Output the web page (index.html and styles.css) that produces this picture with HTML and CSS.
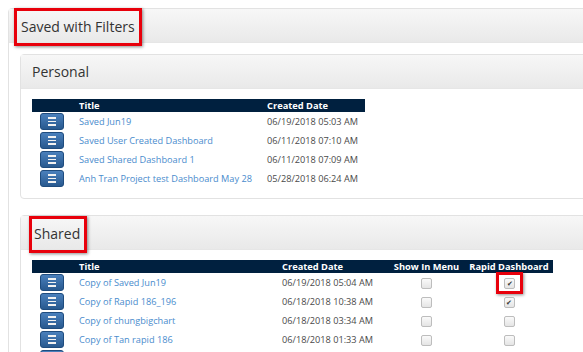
FILE: index.html
```html
<!DOCTYPE html>
<html lang="en">
<head>
    <meta charset="UTF-8">
    <title>Saved with Filters</title>
    <link rel="stylesheet" href="styles.css">
</head>
<body>
    <div class="panel outer">
        <div class="panel-heading">
            <span class="mark title-mark">Saved with Filters</span>
        </div>
        <div class="panel-body">

            <div class="panel inner">
                <div class="panel-heading">
                    <span class="sub-title">Personal</span>
                </div>
                <div class="panel-body">
                    <table class="grid personal">
                        <thead>
                            <tr>
                                <th class="col-btn"></th>
                                <th class="col-title">Title</th>
                                <th class="col-date">Created Date</th>
                            </tr>
                        </thead>
                        <tbody>
                            <tr>
                                <td><span class="menu-btn"><i></i><i></i><i></i></span></td>
                                <td><a href="#">Saved Jun19</a></td>
                                <td>06/19/2018 05:03 AM</td>
                            </tr>
                            <tr>
                                <td><span class="menu-btn"><i></i><i></i><i></i></span></td>
                                <td><a href="#">Saved User Created Dashboard</a></td>
                                <td>06/11/2018 07:10 AM</td>
                            </tr>
                            <tr>
                                <td><span class="menu-btn"><i></i><i></i><i></i></span></td>
                                <td><a href="#">Saved Shared Dashboard 1</a></td>
                                <td>06/11/2018 07:09 AM</td>
                            </tr>
                            <tr>
                                <td><span class="menu-btn"><i></i><i></i><i></i></span></td>
                                <td><a href="#">Anh Tran Project test Dashboard May 28</a></td>
                                <td>05/28/2018 06:24 AM</td>
                            </tr>
                        </tbody>
                    </table>
                </div>
            </div>

            <div class="panel inner">
                <div class="panel-heading">
                    <span class="mark sub-title shared-mark">Shared</span>
                </div>
                <div class="panel-body">
                    <table class="grid shared">
                        <thead>
                            <tr>
                                <th class="col-btn"></th>
                                <th class="col-title">Title</th>
                                <th class="col-date">Created Date</th>
                                <th class="col-check">Show In Menu</th>
                                <th class="col-check2">Rapid Dashboard</th>
                            </tr>
                        </thead>
                        <tbody>
                            <tr>
                                <td><span class="menu-btn"><i></i><i></i><i></i></span></td>
                                <td><a href="#">Copy of Saved Jun19</a></td>
                                <td>06/19/2018 05:04 AM</td>
                                <td class="center"><span class="check"></span></td>
                                <td class="center"><span class="check-mark"><span class="check on">&#10004;</span></span></td>
                            </tr>
                            <tr>
                                <td><span class="menu-btn"><i></i><i></i><i></i></span></td>
                                <td><a href="#">Copy of Rapid 186_196</a></td>
                                <td>06/18/2018 10:38 AM</td>
                                <td class="center"><span class="check"></span></td>
                                <td class="center"><span class="check on">&#10004;</span></td>
                            </tr>
                            <tr>
                                <td><span class="menu-btn"><i></i><i></i><i></i></span></td>
                                <td><a href="#">Copy of chungbigchart</a></td>
                                <td>06/18/2018 03:34 AM</td>
                                <td class="center"><span class="check"></span></td>
                                <td class="center"><span class="check"></span></td>
                            </tr>
                            <tr>
                                <td><span class="menu-btn"><i></i><i></i><i></i></span></td>
                                <td><a href="#">Copy of Tan rapid 186</a></td>
                                <td>06/18/2018 01:33 AM</td>
                                <td class="center"><span class="check"></span></td>
                                <td class="center"><span class="check"></span></td>
                            </tr>
                            <tr>
                                <td><span class="menu-btn"><i></i><i></i><i></i></span></td>
                                <td></td>
                                <td></td>
                                <td></td>
                                <td></td>
                            </tr>
                        </tbody>
                    </table>
                </div>
            </div>

        </div>
    </div>
</body>
</html>
```

FILE: styles.css
```css
html, body {
    margin: 0;
    padding: 0;
    height: 352px;
    overflow: hidden;
}

body {
    font-family: 'Open Sans', 'Noto Sans', sans-serif;
    background: white;
    padding: 8px 0 0 8px;
    color: #444;
}

.panel {
    border: 1px solid #e2e2e2;
    border-radius: 4px;
    background: white;
    width: 660px;
}

.panel.inner {
    width: 640px;
    margin-bottom: 16px;
}

.panel-heading {
    height: 33px;
    display: flex;
    align-items: center;
    padding-left: 11px;
    background: linear-gradient(#f7f7f7, #e9e9e9);
    border-bottom: 1px solid #e6e6e6;
}

.outer > .panel-heading {
    padding-left: 5px;
}

.outer > .panel-body {
    padding: 11px 0 0 11px;
}

.inner > .panel-body {
    padding: 10px 0 10px 11px;
}

.title-mark {
    font-size: 14px;
    color: #333;
    padding: 6px 4px 7px 4px;
    margin-top: 3px;
}

.sub-title {
    font-size: 14px;
    color: #333;
}

.mark {
    border: 3px solid #e8000b;
    box-shadow: 1px 1px 3px rgba(0, 0, 0, 0.45);
}

.shared-mark {
    margin-left: -3px;
    padding: 5px 4px 7px 2px;
    margin-top: 3px;
}

.grid {
    border-collapse: collapse;
    font-size: 9.2px;
    table-layout: fixed;
}

.grid th {
    background: #00203f;
    color: white;
    font-weight: bold;
    font-size: 9.3px;
    height: 13px;
    padding: 0;
    text-align: left;
    line-height: 13px;
    white-space: nowrap;
}

.grid td {
    height: 19px;
    padding: 0;
    white-space: nowrap;
    color: #4a4a4a;
}

.grid a {
    color: #4a8ccd;
    text-decoration: none;
}

.col-btn {
    width: 47px;
}

.personal .col-title {
    width: 188px;
}

.personal .col-date {
    width: 98px;
}

.shared .col-title {
    width: 203px;
}

.shared .col-date {
    width: 106px;
}

.shared .col-check {
    width: 77px;
    text-align: center !important;
}

.shared .col-check2 {
    width: 88px;
    text-align: center !important;
}

.center {
    text-align: center;
}

.menu-btn {
    display: flex;
    flex-direction: column;
    justify-content: center;
    align-items: center;
    gap: 2px;
    width: 22px;
    height: 15px;
    margin-left: 8px;
    border: 1px solid #1f4c7e;
    border-radius: 3px;
    background: linear-gradient(#4a80bc, #28598f);
}

.menu-btn i {
    display: block;
    width: 8px;
    height: 1.5px;
    background: #f2f2f2;
}

.check {
    display: inline-block;
    width: 9px;
    height: 9px;
    border: 1px solid #bdbdbd;
    border-radius: 2px;
    background: linear-gradient(#fafafa, #e4e4e4);
    vertical-align: middle;
    font-size: 7px;
    line-height: 9px;
    color: #333;
    text-align: center;
}

.check-mark {
    display: inline-block;
    border: 3px solid #e8000b;
    box-shadow: 1px 1px 3px rgba(0, 0, 0, 0.45);
    padding: 2px 5px;
    line-height: 11px;
    margin: -5px 0 -5px 1px;
    vertical-align: middle;
}
```
